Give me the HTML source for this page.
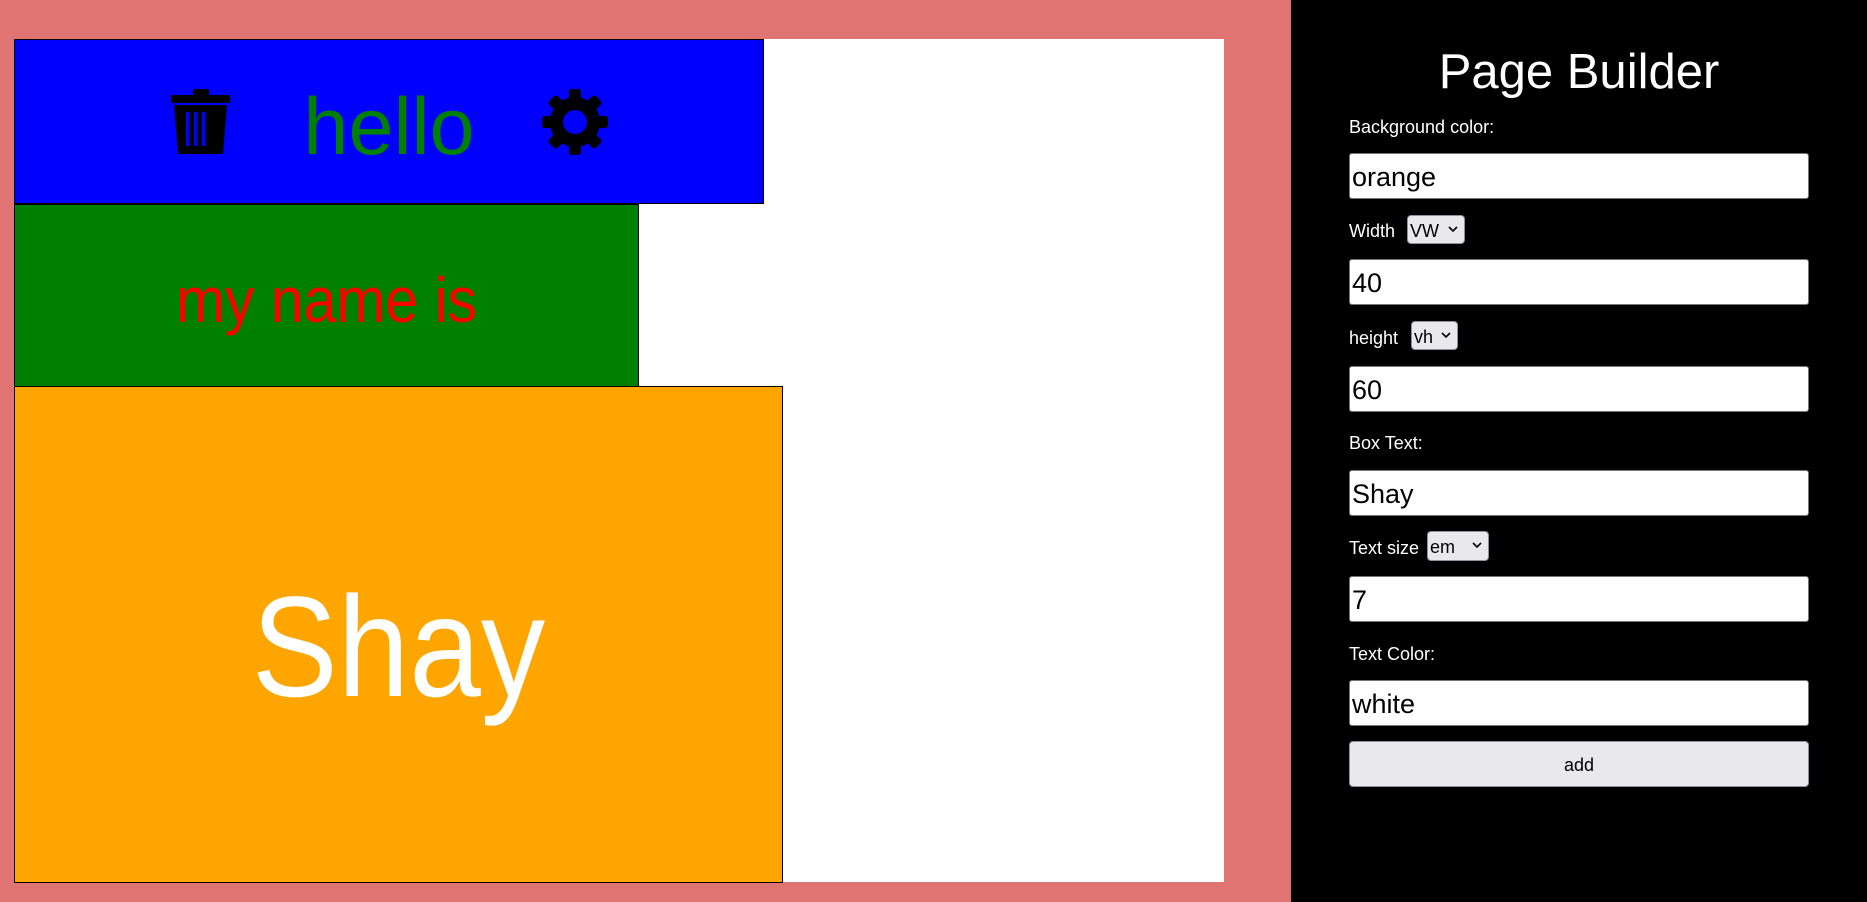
<!DOCTYPE html>
<html><head><meta charset="utf-8"><style>
*{box-sizing:border-box;margin:0;padding:0}
body{width:1867px;height:902px;background:#e07472;position:relative;overflow:hidden;font-family:"Liberation Sans",sans-serif}
.abs{position:absolute}
.main{left:14px;top:39px;width:1210px;height:843px;background:#fff}
.box{position:absolute;border:1px solid #000}
.t{position:absolute;left:0;right:0;text-align:center;line-height:1;white-space:nowrap}
.side{left:1291px;top:0;width:576px;height:902px;background:#000}
.lbl{position:absolute;left:1349px;color:#fff;font-size:18px;line-height:1}
.inp{position:absolute;left:1349px;width:460px;height:46px;background:#fff;border:1px solid #767676;border-radius:3px;font-size:27px;line-height:46px;padding-left:2px;color:#000}
.sel{position:absolute;background:#e9e9ed;border:1px solid #8f8f9d;border-radius:4px;font-size:18px;color:#000;line-height:30px;padding-left:2px}
.sel svg{position:absolute;right:6px;top:10px}
</style></head><body>
<div class="abs main"></div>
<div class="box" style="left:14px;top:39px;width:750px;height:165px;background:#0000ff">
  <svg class="abs" style="left:156px;top:49px" width="60" height="66" viewBox="0 0 60 66"><rect x="0" y="6" width="59" height="8" rx="1"/><rect x="22" y="0" width="16" height="8" rx="2"/><path d="M3 16H56L52 65H7Z"/><rect x="15" y="23" width="3.5" height="34" fill="#0000ff"/><rect x="23" y="23" width="3.5" height="34" fill="#0000ff"/><rect x="31" y="23" width="3.5" height="34" fill="#0000ff"/></svg>
  <div class="t" style="top:47px;font-size:81px;color:#008000">hello</div>
  <svg class="abs" style="left:527px;top:49px" width="66" height="66" viewBox="-33 -33 66 66"><g><rect x="-6" y="-33" width="12" height="66" rx="3"/><rect x="-6" y="-33" width="12" height="66" rx="3" transform="rotate(45)"/><rect x="-6" y="-33" width="12" height="66" rx="3" transform="rotate(90)"/><rect x="-6" y="-33" width="12" height="66" rx="3" transform="rotate(135)"/><circle r="25"/><circle r="12" fill="#0000ff"/></g></svg>
</div>
<div class="box" style="left:14px;top:204px;width:625px;height:183px;background:#008000">
  <div class="t" style="top:63px;font-size:64px;color:#f00;transform:scaleX(0.92)">my name is</div>
</div>
<div class="box" style="left:14px;top:386px;width:769px;height:497px;background:#ffa500">
  <div class="t" style="top:189px;font-size:143px;color:#fff;transform:scaleX(0.9)">Shay</div>
</div>
<div class="abs side"></div>
<div class="abs" style="left:1291px;width:576px;top:48px;text-align:center;color:#fff;font-size:49px;line-height:1">Page Builder</div>
<div class="lbl" style="top:118px">Background color:</div>
<div class="inp" style="top:153px">orange</div>
<div class="lbl" style="top:222px">Width</div>
<div class="sel" style="left:1407px;top:215px;width:58px;height:29px">VW<svg width="10" height="7" viewBox="0 0 10 7"><path d="M1 1L5 5L9 1" stroke="#000" stroke-width="1.6" fill="none"/></svg></div>
<div class="inp" style="top:259px">40</div>
<div class="lbl" style="top:329px">height</div>
<div class="sel" style="left:1411px;top:321px;width:47px;height:29px">vh<svg width="10" height="7" viewBox="0 0 10 7"><path d="M1 1L5 5L9 1" stroke="#000" stroke-width="1.6" fill="none"/></svg></div>
<div class="inp" style="top:366px">60</div>
<div class="lbl" style="top:434px">Box Text:</div>
<div class="inp" style="top:470px">Shay</div>
<div class="lbl" style="top:539px">Text size</div>
<div class="sel" style="left:1427px;top:531px;width:62px;height:30px">em<svg width="10" height="7" viewBox="0 0 10 7"><path d="M1 1L5 5L9 1" stroke="#000" stroke-width="1.6" fill="none"/></svg></div>
<div class="inp" style="top:576px">7</div>
<div class="lbl" style="top:645px">Text Color:</div>
<div class="inp" style="top:680px">white</div>
<div class="abs" style="left:1349px;top:741px;width:460px;height:46px;background:#e9e9ed;border:1px solid #8f8f9d;border-radius:4px;text-align:center;font-size:18px;line-height:46px;color:#000">add</div>
</body></html>
